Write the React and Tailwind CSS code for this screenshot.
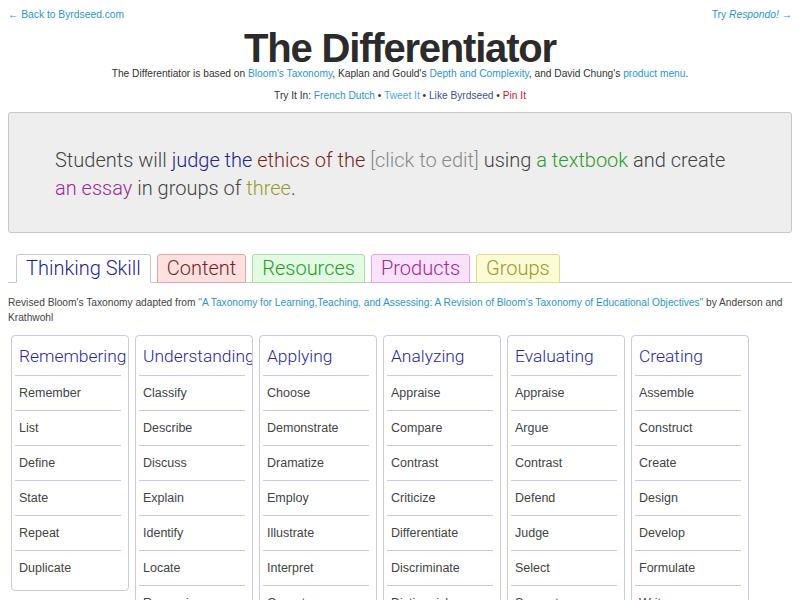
import React from 'react';

const tabs = [
    {label: 'Thinking Skill', cls: 'bg-white border-[#c8c8c8] border-b-white text-[#24248f]'},
    {label: 'Content', cls: 'bg-[#fde0e0] border-[#e2a6a6] text-[#7a1f1f]'},
    {label: 'Resources', cls: 'bg-[#e2fbe2] border-[#a8e0a8] text-[#2c9a2c]'},
    {label: 'Products', cls: 'bg-[#fbe2fb] border-[#e0a8e0] text-[#a0289e]'},
    {label: 'Groups', cls: 'bg-[#fbfbd6] border-[#dede8a] text-[#9a9a26]'},
];

const columns = [
    {title: 'Remembering', items: ['Remember', 'List', 'Define', 'State', 'Repeat', 'Duplicate']},
    {title: 'Understanding', items: ['Classify', 'Describe', 'Discuss', 'Explain', 'Identify', 'Locate', 'Recognize', 'Report', 'Select', 'Translate']},
    {title: 'Applying', items: ['Choose', 'Demonstrate', 'Dramatize', 'Employ', 'Illustrate', 'Interpret', 'Operate', 'Schedule', 'Sketch', 'Solve']},
    {title: 'Analyzing', items: ['Appraise', 'Compare', 'Contrast', 'Criticize', 'Differentiate', 'Discriminate', 'Distinguish', 'Examine', 'Experiment', 'Question']},
    {title: 'Evaluating', items: ['Appraise', 'Argue', 'Contrast', 'Defend', 'Judge', 'Select', 'Support', 'Value', 'Evaluate']},
    {title: 'Creating', items: ['Assemble', 'Construct', 'Create', 'Design', 'Develop', 'Formulate', 'Write']},
];

const sans = "font-['Helvetica_Neue','Liberation_Sans',Arial,sans-serif]";
const light = "font-['Roboto','Liberation_Sans',sans-serif] font-light";

export default function App() {
    return (
        <div className={`min-h-screen bg-white text-[#333] px-2 ${sans}`}>
            {/* links du haut */}
            <div className="flex justify-between pt-[8px] text-[10.3px] leading-[14px] text-[#2a97c9]">
                <span>← Back to Byrdseed.com</span>
                <span>Try <i>Respondo!</i> →</span>
            </div>

            <h1 className="mt-[6px] text-center text-[40px] leading-[40px] font-bold tracking-[-1.2px] text-[#2b2b2b]">
                The Differentiator
            </h1>
            <p className="text-center text-[10.2px] leading-[12px]">
                The Differentiator is based on <span className="text-[#2a97c9]">Bloom's Taxonomy</span>, Kaplan and
                Gould's <span className="text-[#2a97c9]">Depth and Complexity</span>, and David
                Chung's <span className="text-[#2a97c9]">product menu</span>.
            </p>
            <p className="mt-[9px] text-center text-[10.2px] leading-[14px]">
                Try It In: <span className="text-[#2a97c9]">French Dutch</span> • <span className="text-[#4aa9e2]">Tweet It</span> • <span className="text-[#3b5590]">Like Byrdseed</span> • <span className="text-[#c8202a]">Pin It</span>
            </p>

            {/* phrase */}
            <div className={`mt-[9px] bg-[#eeeeee] border border-[#c8c8c8] rounded-[3px] pl-[46px] pr-[50px] pt-[33px] pb-[30px] text-[20px] leading-[28px] text-[#444] ${light}`}>
                Students will <span className="text-[#24248f]">judge the</span> <span className="text-[#7a1f1f]">ethics of the</span> <span className="text-[#888]">[click to edit]</span> using <span className="text-[#2c9a2c]">a textbook</span> and create <span className="text-[#a0289e]">an essay</span> in groups of <span className="text-[#9a9a26]">three</span>.
            </div>

            {/* onglets */}
            <div className="mt-[21px] flex items-end gap-[6px] pl-2 border-b border-[#c8c8c8]">
                {tabs.map((t) => (
                    <div key={t.label}
                         className={`-mb-px border rounded-t-[3px] px-[9px] text-[20px] leading-[27px] ${light} ${t.cls}`}>
                        {t.label}
                    </div>
                ))}
            </div>

            <p className="mt-[12px] text-[10.2px] leading-[15px] text-[#444]">
                Revised Bloom's Taxonomy adapted from <span className="text-[#2a97c9]">"A Taxonomy for Learning,Teaching, and Assessing: A Revision of Bloom's Taxonomy of Educational Objectives"</span> by Anderson and Krathwohl
            </p>

            {/* colonnes */}
            <div className="mt-[10px] flex items-start gap-[6px] pl-[3px]">
                {columns.map((col) => (
                    <div key={col.title}
                         className="w-[118px] shrink-0 overflow-hidden border border-[#c9c9ef] rounded-[4px] pl-[3px] pr-[7px] pb-[4px]">
                        <div className={`px-1 pt-[10px] pb-[9px] text-[17.4px] leading-[20px] whitespace-nowrap text-[#27279b] border-b border-[#c9c9ef] ${light}`}>
                            {col.title}
                        </div>
                        {col.items.map((item, i) => (
                            <div key={item + i}
                                 className={`px-1 text-[12.5px] leading-[34px] text-[#444] ${i < col.items.length - 1 ? 'border-b border-[#c9c9ef]' : 'pb-px'}`}>
                                {item}
                            </div>
                        ))}
                    </div>
                ))}
            </div>
        </div>
    );
}
